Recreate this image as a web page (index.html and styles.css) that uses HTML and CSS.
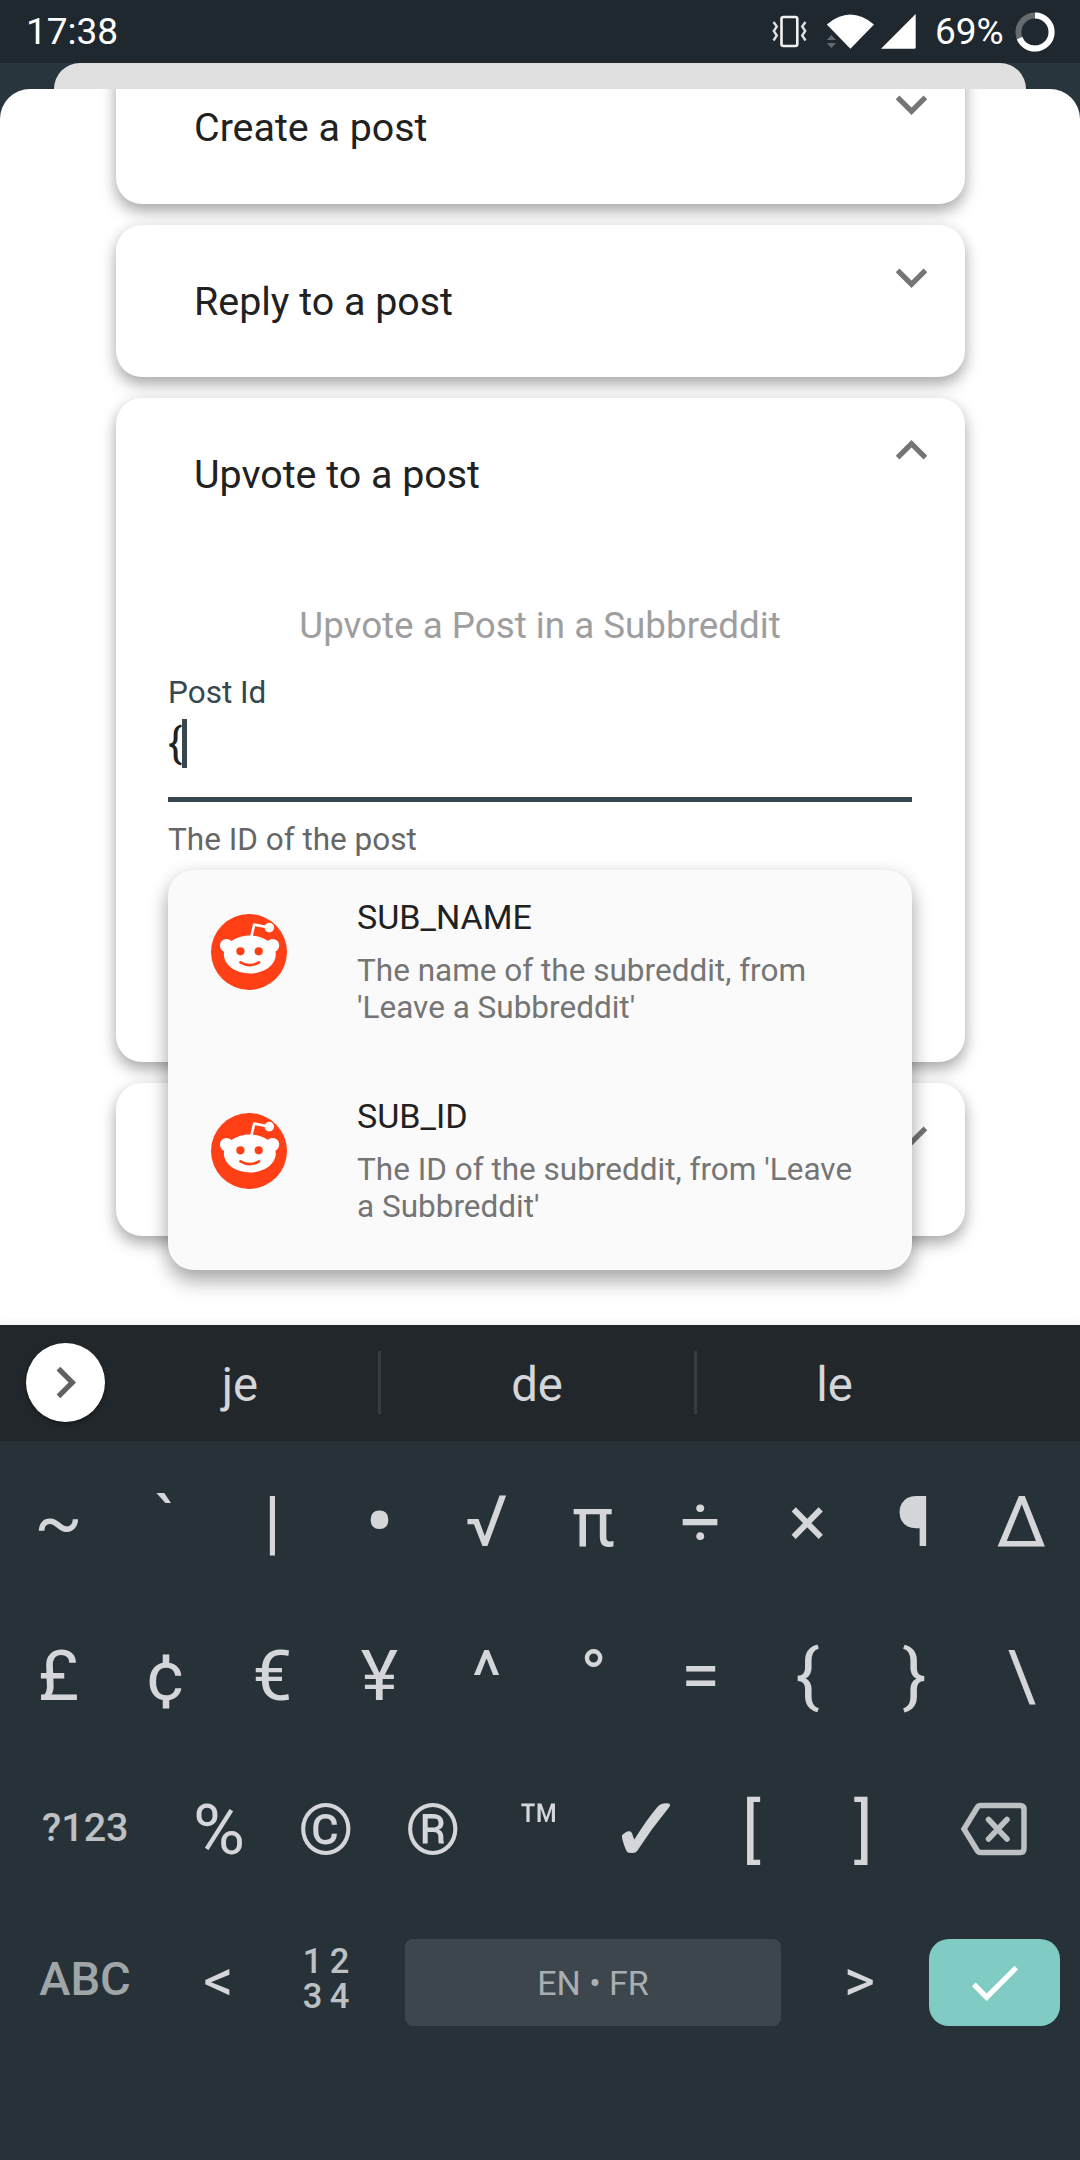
FILE: index.html
```html
<!DOCTYPE html>
<html lang="en">
<head>
<meta charset="utf-8">
<title>Upvote to a post</title>
<link rel="stylesheet" href="styles.css">
</head>
<body>
<svg class="defs" width="0" height="0">
  <symbol id="down" viewBox="0 0 24 24"><path d="M16.59 8.59 12 13.17 7.41 8.59 6 10l6 6 6-6z"/></symbol>
  <symbol id="up" viewBox="0 0 24 24"><path d="M12 8l-6 6 1.41 1.41L12 10.83l4.59 4.58L18 14z"/></symbol>
  <symbol id="right" viewBox="0 0 24 24"><path d="M10 6 8.59 7.41 13.17 12l-4.58 4.59L10 18l6-6z"/></symbol>
  <symbol id="check" viewBox="0 0 24 24"><path d="M9 16.17 4.83 12l-1.42 1.41L9 19 21 7l-1.41-1.41z"/></symbol>
  <symbol id="reddit" viewBox="11 14.2 76 76">
    <circle cx="49" cy="52.2" r="38" fill="#ff4017"/>
    <g fill="#fff">
      <circle cx="26.5" cy="45.7" r="6.6"/><circle cx="72.6" cy="45.7" r="6.6"/>
      <ellipse cx="49.8" cy="54.7" rx="26" ry="19"/>
      <circle cx="69.3" cy="27.8" r="4.8"/>
    </g>
    <path d="M51.3 37 54.2 24.8 69 27.8" fill="none" stroke="#fff" stroke-width="2.6" stroke-linejoin="round"/>
    <circle cx="40.4" cy="51.5" r="4.1" fill="#ff4017"/><circle cx="58.7" cy="51.5" r="4.1" fill="#ff4017"/>
    <path d="M40.5 62.6Q49.8 68 59 62.6" fill="none" stroke="#ff4017" stroke-width="2.7" stroke-linecap="round"/>
  </symbol>
</svg>
<div class="screen">
  <header class="status">
    <span class="clock">17:38</span>
    <svg class="status-icons" width="148" height="63" viewBox="770 0 148 63">
      <rect x="781.5" y="17" width="15.8" height="29" rx="2" fill="none" stroke="#f1f2f2" stroke-width="2.6"/>
      <path d="M773.5 22l3.3 4.5-3 4.5 3 4.5-3.3 5M805.5 22l-3.3 4.5 3 4.5-3 4.5 3.3 5" fill="none" stroke="#dfe1e2" stroke-width="2.4"/>
      <path d="M826.8 24.5Q850.4 4.5 874 24.5L850.4 48.7z" fill="#fff"/>
      <path d="M826.8 40l4.6-5 4.6 5zM826.8 43l4.6 5 4.6-5z" fill="#636a70"/>
      <path d="M881 48.7 915.7 14V47.2q0 1.5-1.5 1.5z" fill="#fff"/>
    </svg>
    <span class="battery">69%</span>
    <svg class="ring" width="40" height="40" viewBox="0 0 40 40">
      <circle cx="20" cy="20" r="16.6" fill="none" stroke="#656b6f" stroke-width="6"/>
      <circle cx="20" cy="20" r="16.6" fill="none" stroke="#fff" stroke-width="6" pathLength="100" stroke-dasharray="69 100" transform="rotate(-90 20 20)"/>
    </svg>
  </header>

  <main class="stage">
    <div class="back-sheet"></div>
    <section class="sheet">
      <div class="cards">
        <article class="card"><h2 class="title">Create a post</h2><svg class="chevron"><use href="#down"/></svg></article>
        <article class="card"><h2 class="title">Reply to a post</h2><svg class="chevron"><use href="#down"/></svg></article>
        <article class="card card-open">
          <div class="card-head"><h2 class="title">Upvote to a post</h2><svg class="chevron"><use href="#up"/></svg></div>
          <p class="summary">Upvote a Post in a Subbreddit</p>
          <div class="field">
            <div class="label">Post Id</div>
            <div class="input"><span class="value">{</span><span class="caret"></span></div>
            <div class="helper">The ID of the post</div>
          </div>
        </article>
        <article class="card"><svg class="chevron"><use href="#down"/></svg></article>
      </div>
      <div class="popup">
        <div class="option">
          <svg class="avatar"><use href="#reddit"/></svg>
          <div><div class="name">SUB_NAME</div><div class="info">The name of the subreddit, from<br>'Leave a Subbreddit'</div></div>
        </div>
        <div class="option">
          <svg class="avatar"><use href="#reddit"/></svg>
          <div><div class="name">SUB_ID</div><div class="info">The ID of the subreddit, from 'Leave<br>a Subbreddit'</div></div>
        </div>
      </div>
    </section>
  </main>

  <section class="keyboard">
    <div class="suggestions">
      <div class="expand"><svg class="expand-icon"><use href="#right"/></svg></div>
      <span class="word">je</span><span class="word word-mid">de</span><span class="word">le</span>
    </div>
    <div class="keys">
      <div class="row"><span>~</span><span>`</span><span>|</span><span class="bullet">•</span><span>√</span><span>π</span><span>÷</span><span>×</span><span>¶</span><span>∆</span></div>
      <div class="row"><span>£</span><span>¢</span><span>€</span><span>¥</span><span>^</span><span>°</span><span>=</span><span>{</span><span>}</span><span>\</span></div>
      <div class="row row-side"><span class="mode">?123</span><span>%</span><span>©</span><span>®</span><span>™</span><span class="tick">✓</span><span class="open">[</span><span class="close">]</span>
        <span class="erase"><svg width="68" height="54" viewBox="0 0 68 54" fill="none" stroke="#bdc1c3" stroke-width="5.5"><path d="M20.5 3.5H60q4 0 4 4V46.500q0 4-4 4H20.500q-2 0-3.300-2L4 27 17.200 5.500q1.300-2 3.300-2z"/><path d="M28.500 17.500 47 37M47 17.500 28.500 37" stroke-linecap="round"/></svg></span>
      </div>
      <div class="row row-bottom"><span class="abc">ABC</span><span class="angle">&lt;</span><span class="pad"><b>1</b><b>2</b><b>3</b><b>4</b></span><span class="space">EN • FR</span><span class="angle">&gt;</span><span class="enter"><svg class="enter-icon"><use href="#check"/></svg></span></div>
    </div>
  </section>
</div>
</body>
</html>
```
FILE: styles.css
```css
* { box-sizing: border-box; }
body { margin: 0; font-family: Roboto, "Noto Sans", "DejaVu Sans", sans-serif; }
h2, p { margin: 0; font-weight: 400; }
.defs { position: absolute; }
.screen { width: 1080px; height: 2160px; display: flex; flex-direction: column; overflow: hidden; background: #28353d; }

.status { height: 63px; flex: none; display: flex; align-items: center; background: #20282f; color: #fff; font-size: 37px; line-height: 63px; padding-left: 26px; }
.clock { width: 744px; }
.status-icons { flex: none; }
.battery { width: 79.5px; margin-left: 17px; }
.ring { flex: none; }

.stage { height: 1262px; flex: none; display: flex; flex-direction: column; }
.back-sheet { height: 26px; flex: none; margin: 0 54px; background: #e0e0e0; border-radius: 26px 26px 0 0; }
.sheet { position: relative; flex: 1; background: #fff; border-radius: 30px 30px 0 0; overflow: hidden; box-shadow: inset 0 -8px 8px -6px rgba(0,0,0,.06); }
.cards { display: flex; flex-direction: column; gap: 21px; padding: 0 115.5px; margin-top: -37.2px; }
.card { height: 152.25px; display: flex; align-items: center; background: #fff; border-radius: 26px; box-shadow: 0 8px 16px rgba(0,0,0,.28), 0 3px 14px rgba(0,0,0,.1); padding: 0 21.5px 0 78.5px; }
.card-open { height: 664px; display: block; padding: 0; }
.card-head { height: 152.25px; display: flex; align-items: center; padding: 0 21.5px 0 78.5px; }
.title { padding-top: 1px; font-size: 39.4px; line-height: 46px; color: #212121; }
.chevron { width: 63px; height: 63px; margin-left: auto; align-self: flex-start; margin-top: 21px; fill: #757575; }
.summary { margin-top: 53.2px; font-size: 36.75px; line-height: 43px; text-align: center; color: #9e9e9e; }
.field { margin: 27px 52.5px 0; }
.label { font-size: 31.5px; line-height: 37px; color: #37474f; }
.input { height: 91.5px; padding-top: 8.5px; display: flex; font-size: 42px; line-height: 49px; color: #212121; border-bottom: 5.25px solid #37474f; }
.caret { width: 5.25px; height: 49px; background: #37474f; }
.helper { margin-top: 18.5px; font-size: 31.5px; line-height: 37px; color: #666; }

.popup { position: absolute; left: 168px; top: 781.3px; width: 744px; height: 399.4px; background: #fafafa; border-radius: 26px; box-shadow: 0 12px 20px rgba(0,0,0,.28), 0 3px 18px rgba(0,0,0,.12); }
.option { height: 199px; display: flex; padding: 27px 0 0 43px; }
.avatar { width: 76px; height: 76px; margin: 16.5px 70px 0 0; flex: none; }
.name { font-size: 34.1px; line-height: 40px; color: #212121; }
.info { margin-top: 15px; font-size: 31.5px; line-height: 37px; color: #757575; }

.keyboard { flex: 1; display: flex; flex-direction: column; background: #273238; color: #d4d6d9; }
.suggestions { height: 116px; flex: none; display: flex; align-items: center; background: #22272b; padding: 0 0 1px 26px; font-size: 47.25px; line-height: 63px; }
.expand { width: 79px; height: 79px; border-radius: 50%; background: #fff; display: flex; align-items: center; justify-content: center; box-shadow: 0 2px 4px rgba(0,0,0,.4); }
.expand-icon { width: 63px; height: 63px; fill: #616161; }
.word { width: 273px; height: 63px; padding: 3px 3px 0 0; text-align: center; }
.word-mid { width: 319px; padding-right: 1px; border: solid #363c40; border-width: 0 3px; }
.word:last-child { width: 278px; }
.keys { padding: 4px 5px 0; }
.row { height: 153.75px; display: flex; font-size: 71px; line-height: 153.75px; text-align: center; }
.row > span { width: 107px; flex: none; }
.row > .bullet { font-size: 88px; }
.row > .mode { width: 160.5px; font-size: 39.5px; font-weight: 500; color: #bdc1c3; line-height: 150px; }
.row > .tick { font-family: "DejaVu Sans", sans-serif; font-size: 90px; -webkit-text-stroke: 1.6px #d4d6d9; }
.row > .open { padding: 0 5px 0 0; }
.row > .close { padding: 0 0 0 5px; }
.row > .erase { flex: 1; display: flex; align-items: center; justify-content: center; padding: 0 2px 0 0; }
.row-bottom { align-items: center; padding-bottom: 2px; }
.row > .abc { width: 160px; font-size: 47px; font-weight: 500; color: #a0a5a7; line-height: 46px; padding-bottom: 6px; }
.row > .angle { font-size: 60px; line-height: 87px; padding-bottom: 3px; }
.row > .pad { width: 54px; margin: 0 52px 6px 27px; display: grid; grid-template-columns: 27px 27px; font-size: 34.5px; line-height: 35px; color: #bdc1c3; }
.pad b { font-weight: 500; }
.row > .space { width: 376px; margin-right: 25px; height: 87px; line-height: 88px; border-radius: 8px; background: #3c464c; color: #a9aeb1; font-size: 34px; }
.row > .enter { width: 131px; height: 87px; margin-left: 16px; border-radius: 20px; background: #80cbc4; display: flex; align-items: center; justify-content: center; }
.enter-icon { width: 63px; height: 63px; fill: #fff; }
```
